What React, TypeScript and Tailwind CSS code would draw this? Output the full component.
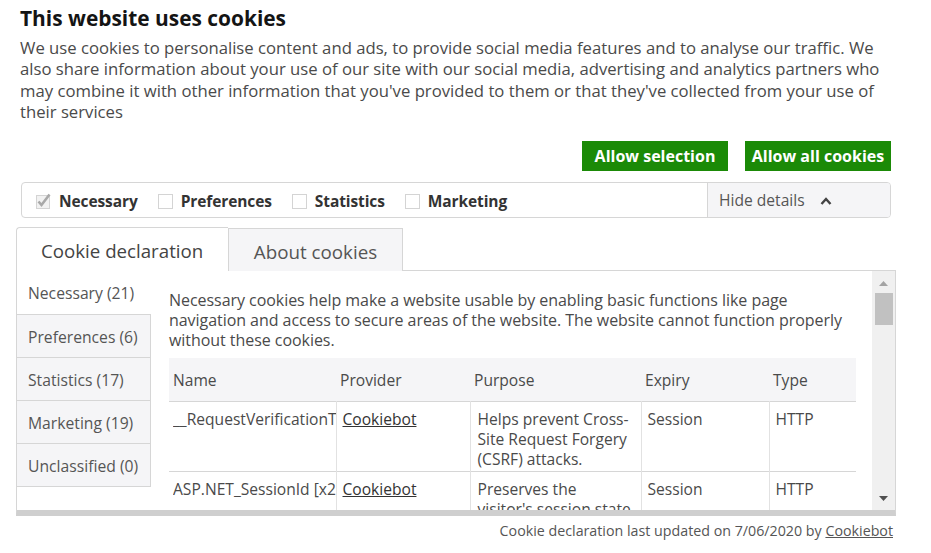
import React from "react";

const categories = [
  { label: "Necessary", checked: true },
  { label: "Preferences", checked: false },
  { label: "Statistics", checked: false },
  { label: "Marketing", checked: false },
];

const sideTabs = [
  "Necessary (21)",
  "Preferences (6)",
  "Statistics (17)",
  "Marketing (19)",
  "Unclassified (0)",
];

const rows = [
  {
    name: "__RequestVerificationToken",
    provider: "Cookiebot",
    purpose: "Helps prevent Cross-Site Request Forgery (CSRF) attacks.",
    expiry: "Session",
    type: "HTTP",
  },
  {
    name: "ASP.NET_SessionId [x2]",
    provider: "Cookiebot",
    purpose: "Preserves the visitor's session state across page requests.",
    expiry: "Session",
    type: "HTTP",
  },
];

const CheckBox = ({ checked }: { checked: boolean }) =>
  checked ? (
    <svg width="15" height="16" viewBox="0 0 15 16" className="shrink-0">
      <rect x="0.5" y="2.5" width="13" height="13" fill="#f2f2f2" stroke="#d4d4d4" />
      <path d="M2.5 8.5 L5.5 12 L13.5 1.5" fill="none" stroke="#a9a9a9" strokeWidth="2.6" />
    </svg>
  ) : (
    <span className="block w-[15px] h-[15px] border border-[#d4d4d4] bg-white shrink-0" />
  );

export default function App() {
  return (
    <div className="w-[931px] h-[553px] bg-white font-['Open_Sans',sans-serif] text-[#444] overflow-hidden">
      <div className="pl-[16px] pr-[35px] pt-[4px]">
        <h1 className="pl-[4px] text-[20.9px] leading-[28px] font-bold text-[#141414]">
          This website uses cookies
        </h1>
        <p className="pl-[4px] mt-[5px] text-[16.7px] leading-[21.3px] text-[#4a4a4a] whitespace-nowrap">
          We use cookies to personalise content and ads, to provide social media features and to analyse our traffic. We
          <br />
          also share information about your use of our site with our social media, advertising and analytics partners who
          <br />
          may combine it with other information that you've provided to them or that they've collected from your use of
          <br />
          their services
        </p>

        <div className="flex justify-end gap-[17px] mt-[19px] pr-[5px]">
          <button className="h-[30px] w-[146px] bg-[#1b8a07] text-white font-bold text-[16px]">
            Allow selection
          </button>
          <button className="h-[30px] w-[146px] bg-[#1b8a07] text-white font-bold text-[16px]">
            Allow all cookies
          </button>
        </div>

        <div className="mx-[5px] mt-[11px] h-[36px] flex border border-[#d6d6d6] rounded-[4px] overflow-hidden">
          <div className="flex-1 flex items-center pl-[14px] pt-[2px] gap-[20px]">
            {categories.map((c) => (
              <label key={c.label} className="flex items-center gap-[8px]">
                <CheckBox checked={c.checked} />
                <span className="font-bold text-[15.5px] text-[#333] tracking-[-0.1px]">{c.label}</span>
              </label>
            ))}
          </div>
          <div className="w-[183px] border-l border-[#d6d6d6] bg-[#f5f5f7] flex items-center pl-[11px] pt-[2px] gap-[15px]">
            <span className="text-[15.6px] text-[#555]">Hide details</span>
            <svg width="12" height="8" viewBox="0 0 12 8">
              <path d="M1.5 7 L6 2 L10.5 7" fill="none" stroke="#444" strokeWidth="2.4" />
            </svg>
          </div>
        </div>

        <div className="flex mt-[9px] h-[44px] items-end">
          <div className="w-[212px] h-[44px] border-l border-t border-[#d6d6d6] rounded-tl-[4px] bg-white flex items-center pl-[24px] pt-[3px] text-[18.7px] text-[#444]">
            Cookie declaration
          </div>
          <div className="w-[175px] h-[43px] border border-b-0 border-[#d6d6d6] bg-[#f5f5f7] flex items-center justify-center pt-[3px] text-[18.8px] text-[#555]">
            About cookies
          </div>
          <div className="flex-1 border-b border-[#d6d6d6]" />
        </div>

        <div className="h-[245px] flex border-l border-r border-[#d6d6d6] border-b-[6px] border-b-[#cfcfcf]">
          <div className="w-[134px] flex flex-col">
            {sideTabs.map((t, i) => (
              <div
                key={t}
                className={
                  i === 0
                    ? "h-[43px] flex items-center pl-[11px] pt-[3px] text-[15.7px] text-[#555] bg-white"
                    : "h-[43px] flex items-center pl-[11px] pt-[3px] text-[15.7px] text-[#555] bg-[#f5f5f7] border-t border-r border-[#d6d6d6] last:border-b last:h-[44px]"
                }
              >
                {t}
              </div>
            ))}
          </div>

          <div className="flex-1 overflow-hidden pl-[18px] pr-[18px] pt-[19px]">
            <p className="text-[16px] leading-[20px] text-[#4a4a4a] tracking-[-0.05px] whitespace-nowrap">
              Necessary cookies help make a website usable by enabling basic functions like page
              <br />
              navigation and access to secure areas of the website. The website cannot function properly
              <br />
              without these cookies.
            </p>
            <table className="mt-[8px] w-[687px] table-fixed border-collapse text-[15.6px] text-[#4a4a4a]">
              <colgroup>
                <col className="w-[167px]" />
                <col className="w-[134px]" />
                <col className="w-[171px]" />
                <col className="w-[128px]" />
                <col />
              </colgroup>
              <thead>
                <tr className="bg-[#f5f5f7] h-[43px] border-b border-[#d6d6d6]">
                  {["Name", "Provider", "Purpose", "Expiry", "Type"].map((h) => (
                    <th key={h} className="text-left font-normal pl-[4px] pt-[3px]">
                      {h}
                    </th>
                  ))}
                </tr>
              </thead>
              <tbody>
                {rows.map((r) => (
                  <tr key={r.name} className="border-b border-[#d6d6d6] align-top leading-[20px]">
                    <td className="pl-[4px] pt-[7px] pb-[3px] h-[70px]">
                      <div className="overflow-hidden whitespace-nowrap">{r.name}</div>
                    </td>
                    <td className="pl-[6px] pt-[7px] border-l border-[#e2e2e2]">
                      <span className="underline text-[#333]">{r.provider}</span>
                    </td>
                    <td className="pl-[7px] pr-[6px] pt-[7px] border-l border-[#e2e2e2]">{r.purpose}</td>
                    <td className="pl-[6px] pt-[7px] border-l border-[#e2e2e2]">{r.expiry}</td>
                    <td className="pl-[6px] pt-[7px] border-l border-[#e2e2e2]">{r.type}</td>
                  </tr>
                ))}
              </tbody>
            </table>
          </div>

          <div className="w-[23px] bg-[#f0f0f0] flex flex-col items-center pt-[10px] pb-[9px]">
            <svg width="9" height="5" viewBox="0 0 9 5">
              <path d="M0 5 L4.5 0 L9 5 Z" fill="#a3a3a3" />
            </svg>
            <div className="mt-[7px] w-[18px] h-[32px] bg-[#c1c1c1]" />
            <div className="flex-1" />
            <svg width="9" height="5" viewBox="0 0 9 5">
              <path d="M0 0 L4.5 5 L9 0 Z" fill="#505050" />
            </svg>
          </div>
        </div>

        <div className="flex justify-end pr-[3px] mt-[5px] text-[14.25px] leading-[20px] text-[#555]">
          Cookie declaration last updated on 7/06/2020 by&nbsp;<span className="underline">Cookiebot</span>
        </div>
      </div>
    </div>
  );
}
